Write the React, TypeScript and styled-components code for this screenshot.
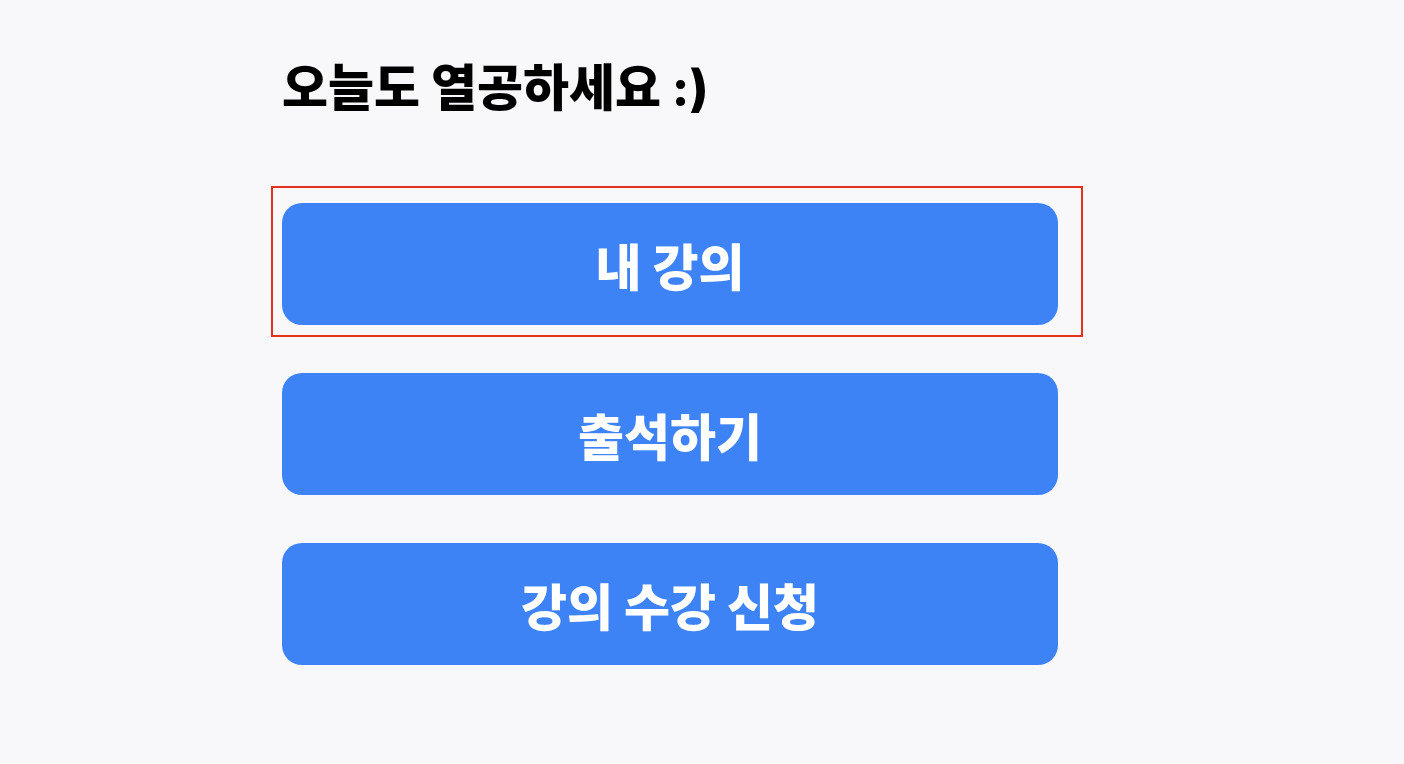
import React from 'react';
import styled, { createGlobalStyle } from 'styled-components';

const MENU = ['내 강의', '출석하기', '강의 수강 신청'];

const GlobalStyle = createGlobalStyle`
  html, body {
    margin: 0;
    padding: 0;
    background: #f8f8fa;
  }
  body {
    font-family: Inter, "Noto Sans CJK KR", "Noto Sans", sans-serif;
  }
`;

const App: React.FC = () => {
  return (
    <>
      <GlobalStyle />
      <Page>
        <Column>
          <Title>오늘도 열공하세요 :)</Title>
          <Menu>
            {MENU.map((label, i) => (
              <MenuItem key={label}>
                {i === 0 && <Highlight />}
                <MenuButton type="button">{label}</MenuButton>
              </MenuItem>
            ))}
          </Menu>
        </Column>
      </Page>
    </>
  );
};

const Page = styled.main`
  box-sizing: border-box;
  min-height: 100vh;
  padding: 58px 0 0 282px;
`;

const Column = styled.div`
  width: 776px;
`;

const Title = styled.h1`
  margin: 0;
  font-size: 50px;
  font-weight: 800;
  line-height: 60px;
  color: #000;
`;

const Menu = styled.div`
  display: flex;
  flex-direction: column;
  gap: 48px;
  margin-top: 85px;
`;

const MenuItem = styled.div`
  position: relative;
`;

const Highlight = styled.div`
  position: absolute;
  top: -17px;
  left: -11px;
  right: -25px;
  bottom: -12px;
  border: 2px solid #e5321c;
  pointer-events: none;
`;

const MenuButton = styled.button`
  display: flex;
  align-items: center;
  justify-content: center;
  width: 100%;
  height: 122px;
  border: none;
  border-radius: 20px;
  background: #3d83f5;
  color: #fff;
  font-family: inherit;
  font-size: 50px;
  font-weight: 800;
  cursor: pointer;
`;

export default App;
